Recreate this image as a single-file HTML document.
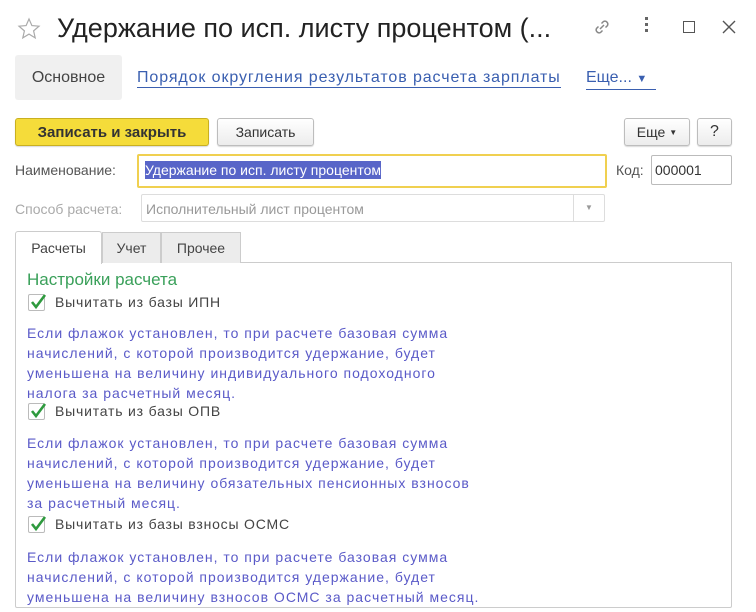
<!DOCTYPE html>
<html><head><meta charset="utf-8"><style>
*{margin:0;padding:0;box-sizing:border-box}
body{width:756px;height:612px;background:#fff;font-family:"Liberation Sans",sans-serif;position:relative;overflow:hidden;color:#333}
.a{position:absolute;white-space:nowrap}
.btn{position:absolute;border:1px solid #bdbdbd;border-radius:3px;background:linear-gradient(#fff,#ececec);font-size:14px;display:flex;align-items:center;justify-content:center;box-shadow:0 1px 1px rgba(0,0,0,.15)}
.desc{position:absolute;left:27px;font-size:14px;line-height:20px;color:#5a5ac8;white-space:nowrap;letter-spacing:1px}
.cb{position:absolute;left:28px;width:17px;height:17px;border:1px solid #bbb;border-radius:2px;background:#fff}
.ck{position:absolute;left:28px}
.cbl{position:absolute;left:55px;font-size:14px;color:#444;letter-spacing:.8px}
</style></head><body>
<svg class="a" style="left:17px;top:17px" width="24" height="24" viewBox="0 0 24 24"><path d="M12 2l2.9 6.6 7.1.6-5.4 4.7 1.6 7-6.2-3.8-6.2 3.8 1.6-7L2 9.2l7.1-.6z" fill="none" stroke="#aaa" stroke-width="1.2"/></svg>
<div class="a" style="left:57px;top:13px;font-size:27px;color:#222">Удержание по исп. листу процентом (...</div>
<svg class="a" style="left:590px;top:15px" width="24" height="24" viewBox="0 0 24 24"><g fill="none" stroke="#888" stroke-width="1.5"><path d="M10 14l4-4"/><path d="M8.5 11.5l-2 2a3 3 0 004 4l2-2"/><path d="M15.5 12.5l2-2a3 3 0 00-4-4l-2 2"/></g></svg>
<div class="a" style="left:645px;top:17px;width:3px;height:3px;background:#666;box-shadow:0 6px 0 #666,0 12px 0 #666"></div>
<div class="a" style="left:683px;top:21px;width:12px;height:12px;border:1.5px solid #555"></div>
<svg class="a" style="left:722px;top:20px" width="14" height="14" viewBox="0 0 14 14"><path d="M1 1l12 12M13 1L1 13" stroke="#555" stroke-width="1.4"/></svg>
<div class="a" style="left:15px;top:55px;width:107px;height:45px;background:#f0f0f0;border-radius:3px;font-size:16px;color:#444;display:flex;align-items:center;justify-content:center">Основное</div>
<div class="a" style="left:137px;top:68px;font-size:16px;color:#3a5fb0;border-bottom:1px solid #3a5fb0;line-height:19px;letter-spacing:.9px">Порядок округления результатов расчета зарплаты</div>
<div class="a" style="left:586px;top:68px;font-size:16px;color:#3a5fb0;border-bottom:1px solid #3a5fb0;line-height:19px;width:70px">Еще... <span style="font-size:11px">▼</span></div>
<div class="btn" style="left:15px;top:118px;width:194px;height:28px;background:#f5dc3a;border-color:#c9b020;color:#333;font-size:15px;font-weight:bold">Записать и закрыть</div>
<div class="btn" style="left:217px;top:118px;width:97px;height:28px">Записать</div>
<div class="btn" style="left:624px;top:118px;width:66px;height:28px">Еще <span style="font-size:8px;margin-left:4px">▼</span></div>
<div class="btn" style="left:697px;top:118px;width:35px;height:28px;font-size:16px">?</div>
<div class="a" style="left:15px;top:162px;font-size:14px;color:#555">Наименование:</div>
<div class="a" style="left:137px;top:154px;width:470px;height:34px;border:2px solid #f0d050;border-radius:2px"></div>
<div class="a" style="left:145px;top:161px;font-size:14px;color:#fff;background:#5865c8;padding:1px 0">Удержание по исп. листу процентом</div>
<div class="a" style="left:616px;top:162px;font-size:14px;color:#555">Код:</div>
<div class="a" style="left:651px;top:155px;width:81px;height:30px;border:1px solid #bbb;border-radius:2px;font-size:14px;padding:6px 3px;color:#333">000001</div>
<div class="a" style="left:15px;top:201px;font-size:14px;color:#aaa">Способ расчета:</div>
<div class="a" style="left:141px;top:194px;width:464px;height:28px;border:1px solid #ddd;border-radius:2px;font-size:14px;color:#999;padding:6px 4px">Исполнительный лист процентом</div>
<div class="a" style="left:573px;top:195px;width:1px;height:26px;background:#ddd"></div>
<div class="a" style="left:585px;top:203px;font-size:8px;color:#999">▼</div>
<div class="a" style="left:15px;top:262px;width:717px;height:346px;border:1px solid #ccc;border-radius:0 0 2px 2px"></div>
<div class="a" style="left:102px;top:232px;width:59px;height:31px;background:#ececec;border:1px solid #ccc;border-bottom:none;font-size:14px;display:flex;align-items:center;justify-content:center;color:#444">Учет</div>
<div class="a" style="left:161px;top:232px;width:80px;height:31px;background:#ececec;border:1px solid #ccc;border-bottom:none;font-size:14px;display:flex;align-items:center;justify-content:center;color:#444">Прочее</div>
<div class="a" style="left:15px;top:231px;width:87px;height:33px;background:#fff;border:1px solid #ccc;border-bottom:none;border-radius:3px 3px 0 0;font-size:14px;display:flex;align-items:center;justify-content:center;color:#444">Расчеты</div>
<div class="a" style="left:27px;top:270px;font-size:17px;color:#3aa05a">Настройки расчета</div>
<div class="cb" style="top:294px"></div><svg class="ck" style="top:292px" width="20" height="20" viewBox="0 0 20 20"><path d="M4 10l4 5 9-12" fill="none" stroke="#2e9a3e" stroke-width="2.6"/></svg>
<div class="cbl" style="top:294px">Вычитать из базы ИПН</div>
<div class="desc" style="top:323px">Если флажок установлен, то при расчете базовая сумма<br>начислений, с которой производится удержание, будет<br>уменьшена на величину индивидуального подоходного<br>налога за расчетный месяц.</div>
<div class="cb" style="top:403px"></div><svg class="ck" style="top:401px" width="20" height="20" viewBox="0 0 20 20"><path d="M4 10l4 5 9-12" fill="none" stroke="#2e9a3e" stroke-width="2.6"/></svg>
<div class="cbl" style="top:403px">Вычитать из базы ОПВ</div>
<div class="desc" style="top:433px">Если флажок установлен, то при расчете базовая сумма<br>начислений, с которой производится удержание, будет<br>уменьшена на величину обязательных пенсионных взносов<br>за расчетный месяц.</div>
<div class="cb" style="top:516px"></div><svg class="ck" style="top:514px" width="20" height="20" viewBox="0 0 20 20"><path d="M4 10l4 5 9-12" fill="none" stroke="#2e9a3e" stroke-width="2.6"/></svg>
<div class="cbl" style="top:516px">Вычитать из базы взносы ОСМС</div>
<div class="desc" style="top:547px">Если флажок установлен, то при расчете базовая сумма<br>начислений, с которой производится удержание, будет<br>уменьшена на величину взносов ОСМС за расчетный месяц.</div>
</body></html>
